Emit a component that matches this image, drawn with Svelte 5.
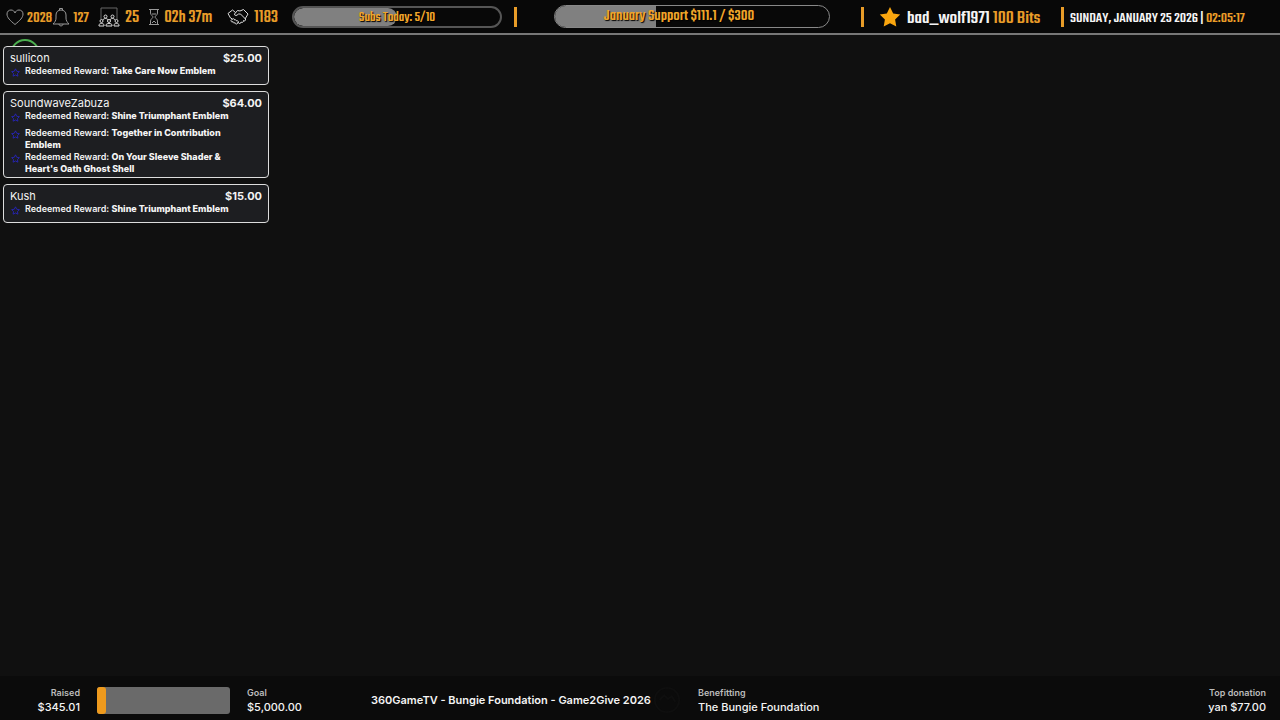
<script lang="ts">
	const stats = [
		{ icon: 'heart', label: 'Followers', value: '2028', size: 'small' },
		{ icon: 'bell', label: 'Subscribers', value: '127', size: 'small' },
		{ icon: 'audience', label: 'Viewers', value: '25', size: 'large' },
		{ icon: 'hourglass', label: 'Uptime', value: '02h 37m', size: 'large' },
		{ icon: 'handshake', label: 'Raiders', value: '1183', size: 'large' },
	];

	const donations = [
		{ name: 'sullicon', amount: '$25.00', rewards: ['Take Care Now Emblem'] },
		{
			name: 'SoundwaveZabuza',
			amount: '$64.00',
			rewards: [
				'Shine Triumphant Emblem',
				'Together in Contribution Emblem',
				"On Your Sleeve Shader & Heart's Oath Ghost Shell",
			],
		},
		{ name: 'Kush', amount: '$15.00', rewards: ['Shine Triumphant Emblem'] },
	];

	const subs = { current: 5, goal: 10 };
	const support = { current: 111.1, goal: 300 };
	const raised = 345.01;
	const goal = 5000;

	const money = (n: number) => n.toLocaleString('en-US', { style: 'currency', currency: 'USD' });
	const percent = (n: number, total: number) => (n / total) * 100;
</script>

<div class="overlay">
	<header>
		<ul class="stats">
			{#each stats as stat (stat.icon)}
				<li class="stat {stat.size}">
					{#if stat.icon === 'heart'}
						<svg width="18" height="18" viewBox="0 0 18 18" role="img" aria-label={stat.label}>
							<path d="M9 16.500C4 12.500 1 9.500 1 6 1 3.500 2.800 2 5 2c2 0 3.300 1.200 4 3 .7-1.800 2-3 4-3 2.200 0 4 1.500 4 4 0 3.500-3 6.500-8 10.500Z" />
						</svg>
					{:else if stat.icon === 'bell'}
						<svg width="18" height="20" viewBox="0 0 18 20" role="img" aria-label={stat.label}>
							<path d="M1 17c2-2 3-3.500 3-6V8c0-3 2-5 5-5s5 2 5 5v3c0 2.500 1 4 3 6ZM7.500 3V1.500h3V3M7 17c0 2.500 4 2.500 4 0" />
						</svg>
					{:else if stat.icon === 'audience'}
						<svg width="22" height="20" viewBox="0 0 22 20" role="img" aria-label={stat.label}>
							<path class="dim" d="M3 12V1h16v11" />
							<g class="bright">
								<circle cx="7.500" cy="9.500" r="1.500" /><circle cx="14.500" cy="9.500" r="1.500" />
								<circle cx="3.500" cy="14" r="1.500" /><circle cx="11" cy="14" r="1.500" /><circle cx="18.500" cy="14" r="1.500" />
								<path d="M5 13c.5-2 4.500-2 5 0M12 13c.5-2 4.500-2 5 0M1 19v-1c0-2 5-2 5 0v1ZM8 19v-1c0-2 6-2 6 0v1ZM16 19v-1c0-2 5-2 5 0v1Z" />
							</g>
						</svg>
					{:else if stat.icon === 'hourglass'}
						<svg width="10" height="18" viewBox="0 0 10 18" role="img" aria-label={stat.label}>
							<path d="M0 1.500h10M0 16.500h10M1.500 2v3C1.500 7 4 8 4 9s-2.500 2-2.500 4v3M8.500 2v3C8.500 7 6 8 6 9s2.500 2 2.500 4v3M3 15l2-2 2 2M3 6h4" />
						</svg>
					{:else}
						<svg class="bright" width="22" height="18" viewBox="0 0 22 18" role="img" aria-label={stat.label}>
							<path d="M1 5.500 5.500 2l3 2.500M1 5.500 3.500 10l2 1M16.500 1.500 21 6l-3 5M16.500 1.500 13 3 10.500 2.500 7.500 6c0 2 2 2 4 0l2 0 5 5c.5 1.500-1 2.500-2 1.500.5 1.500-1.500 2.500-2.500 1.500 0 1.500-1.500 2-2.500 1l-1-1M5.500 11 4 12.500c0 1.500 1 1.500 2 1 0 1.500 1 2 2 1 0 1.500 1.500 2 2.500 1l1-1.500c0-1-1-1.500-2-1 0-1-1-1.500-2-1 0-1.500-1-1.500-2-1" />
						</svg>
					{/if}
					<span>{stat.value}</span>
				</li>
			{/each}
		</ul>

		<div class="section subs">
			<div class="meter">
				<div class="meter-fill" style={`width: ${percent(subs.current, subs.goal)}%`}></div>
				<span>Subs Today: {subs.current}/{subs.goal}</span>
			</div>
		</div>

		<div class="section support">
			<div class="meter">
				<div class="meter-fill" style={`width: ${percent(support.current, support.goal)}%`}></div>
				<span>January Support ${support.current} / ${support.goal}</span>
			</div>
		</div>

		<div class="section cheer">
			<svg class="star" width="22" height="22" viewBox="0 0 22 22">
				<path d="M11 1l3.200 6.500 7 1-5.100 5 1.200 7L11 17.200 4.700 20.500l1.200-7-5.100-5 7-1Z" />
			</svg>
			<p>bad_wolf1971 <em>100 Bits</em></p>
		</div>

		<div class="section clock">
			<p>SUNDAY, JANUARY 25 2026 | <time>02:05:17</time></p>
		</div>
	</header>

	<main>
		<svg class="ring" width="30" height="30" viewBox="0 0 30 30"><circle cx="15" cy="15" r="14" /></svg>
		<ul class="donations">
			{#each donations as donation (donation.name)}
				<li class="donation">
					<div class="donation-header">
						<span>{donation.name}</span>
						<strong>{donation.amount}</strong>
					</div>
					<ul class="rewards">
						{#each donation.rewards as reward}
							<li>
								<svg width="9" height="9" viewBox="0 0 22 22">
									<path d="M11 2l3 6 6.500 1-4.700 4.600 1.100 6.400-5.900-3-5.900 3 1.100-6.400L1.500 9 8 8Z" />
								</svg>
								<p>Redeemed Reward: <strong>{reward}</strong></p>
							</li>
						{/each}
					</ul>
				</li>
			{/each}
		</ul>
	</main>

	<footer>
		<div class="figure end">
			<small>Raised</small>
			<span>{money(raised)}</span>
		</div>
		<div class="progress">
			<div class="progress-fill" style={`width: ${percent(raised, goal)}%`}></div>
		</div>
		<div class="figure">
			<small>Goal</small>
			<span>{money(goal)}</span>
		</div>
		<div class="campaign">
			<h1>360GameTV - Bungie Foundation - Game2Give 2026</h1>
			<svg width="28" height="28" viewBox="0 0 30 30">
				<circle cx="15" cy="15" r="13" />
				<path d="M7 15l5-5 4 4 4-3 4 6" />
			</svg>
		</div>
		<div class="figure">
			<small>Benefitting</small>
			<span>The Bungie Foundation</span>
		</div>
		<div class="figure end">
			<small>Top donation</small>
			<span>yan $77.00</span>
		</div>
	</footer>
</div>

<style>
	:global(body) {
		background: #101010;
	}

	.overlay {
		display: flex;
		flex-direction: column;
		min-height: 100vh;
		color: #f4f4f4;
		font-family: Inter, 'Liberation Sans', sans-serif;
	}

	ul {
		margin: 0;
		padding: 0;
		list-style: none;
	}

	p {
		margin: 0;
	}

	svg {
		flex: none;
		fill: none;
		stroke: #999;
	}

	header {
		display: grid;
		grid-template-columns: 285fr 229fr 347fr 200fr 219fr;
		align-items: center;
		height: 33px;
		border-bottom: 2px solid #777;
		background: #080808;
		font-family: Teko, 'Liberation Sans Narrow', 'DejaVu Sans Condensed', sans-serif;
		font-weight: 500;
		white-space: nowrap;
	}

	.stats {
		display: grid;
		grid-template-columns: 46fr 46fr 51fr 78fr 58fr;
		padding-left: 6px;
	}

	.stat {
		display: flex;
		align-items: center;
		gap: 3px;
		color: #e89c28;
		font-size: 16px;
	}

	.stat span,
	.section p {
		padding-top: 3px;
	}

	.large {
		gap: 5px;
		font-size: 18px;
	}

	.dim {
		stroke: #666;
	}

	.bright {
		stroke: #ddd;
	}

	.section {
		display: flex;
		align-items: center;
		height: 20px;
	}

	.subs {
		padding: 0 12px 0 7px;
	}

	.support,
	.cheer,
	.clock {
		border-left: 3px solid #e89c28;
	}

	.support {
		padding: 0 31px 0 37px;
	}

	.meter {
		position: relative;
		flex: 1;
		height: 18px;
		border: 2px solid #555;
		border-radius: 12px;
		overflow: hidden;
		color: #f0a52a;
		font-size: 14px;
		line-height: 20px;
		text-align: center;
		text-shadow: 1px 1px 1px #000;
	}

	.meter-fill {
		position: absolute;
		inset: 0 auto 0 0;
		background: #808080;
	}

	.subs .meter-fill {
		border-radius: 12px;
	}

	.support .meter {
		height: 21px;
		padding-right: 26px;
		border: 1px solid #888;
		font-size: 16px;
		line-height: 22px;
	}

	.meter span {
		position: relative;
	}

	.cheer {
		gap: 6px;
		padding-left: 15px;
		font-size: 19px;
	}

	.star {
		fill: #f9a60f;
		stroke: none;
	}

	em,
	time {
		color: #e89c28;
		font-style: normal;
	}

	.clock {
		padding-left: 6px;
		font-size: 15px;
	}

	main {
		position: relative;
		flex: 1;
		padding: 11px 3px;
	}

	.ring {
		position: absolute;
		top: 4px;
		left: 10px;
		stroke: #4caf50;
		stroke-width: 2;
	}

	.donations {
		position: relative;
		display: grid;
		gap: 6px;
		width: 266px;
	}

	.donation {
		padding: 4px 6px 2px;
		border: 1px solid #ddd;
		border-radius: 4px;
		background: #1d1e21;
	}

	.donation-header {
		display: flex;
		justify-content: space-between;
		font-size: 11px;
		line-height: 14px;
	}

	.rewards li {
		display: flex;
		gap: 5px;
		min-height: 17px;
		padding: 0 12px 0 1px;
	}

	.rewards svg {
		margin-top: 3px;
		stroke: #2926c8;
		stroke-width: 2;
	}

	.rewards p {
		font-size: 9px;
		font-weight: 600;
		line-height: 12px;
	}

	.rewards strong {
		font-weight: 800;
	}

	footer {
		display: grid;
		grid-template-columns: 80fr 133fr 107fr 310fr 400fr 151fr;
		gap: 17px;
		align-items: center;
		height: 40px;
		padding: 4px 14px 0 0;
		background: #0b0b0b;
	}

	.figure {
		display: grid;
		font-size: 11px;
		font-weight: 500;
		line-height: 14px;
	}

	.end {
		text-align: right;
	}

	small {
		color: #bbb;
		font-size: 9px;
		font-weight: 600;
		line-height: 14px;
	}

	.progress {
		height: 27px;
		border-radius: 3px;
		background: #6a6a6a;
	}

	.progress-fill {
		height: 100%;
		border-radius: 3px;
		background: #ee9a1d;
	}

	.campaign {
		display: flex;
		align-items: center;
		justify-content: space-between;
	}

	.campaign svg {
		stroke: #0f0f0f;
		stroke-width: 2;
	}

	h1 {
		margin: 0;
		font-size: 11px;
		font-weight: 600;
		white-space: nowrap;
	}
</style>
